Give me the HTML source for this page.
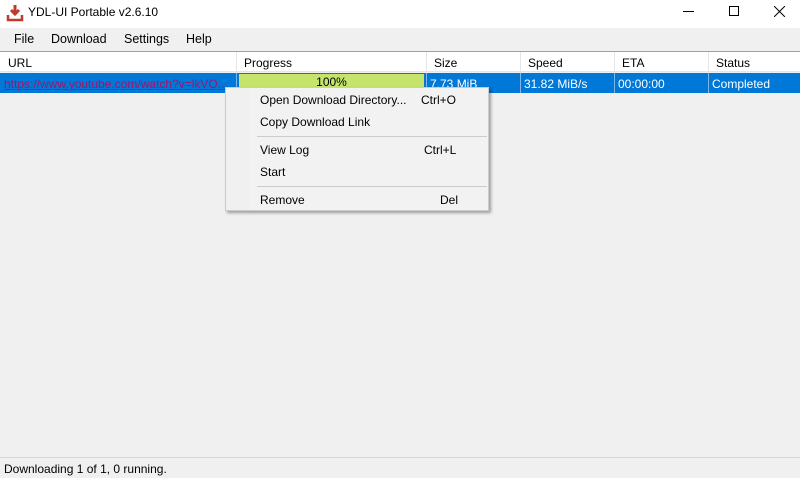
<!DOCTYPE html>
<html><head><meta charset="utf-8"><style>
*{margin:0;padding:0;box-sizing:border-box}
body{width:800px;height:478px;background:#f0f0f0;font-family:"Liberation Sans",sans-serif;font-size:12px;color:#000;position:relative;overflow:hidden}
.a{position:absolute;white-space:nowrap}
</style></head><body>
<div class="a" style="left:0;top:0;width:800px;height:28px;background:#fff"></div>
<svg class="a" style="left:6px;top:4px" width="18" height="18" viewBox="0 0 18 18"><path d="M9 1v9M5 6l4 4 4-4" stroke="#c0392b" stroke-width="3" fill="none"/><path d="M2 11v5h14v-5" stroke="#c0392b" stroke-width="2.5" fill="none"/></svg>
<div class="a" style="left:28px;top:5px;font-size:12px">YDL-UI Portable v2.6.10</div>
<div class="a" style="left:683px;top:11px;width:11px;height:1px;background:#000"></div>
<div class="a" style="left:729px;top:6px;width:10px;height:10px;border:1px solid #000"></div>
<svg class="a" style="left:774px;top:6px" width="11" height="11"><path d="M0 0L11 11M11 0L0 11" stroke="#000" stroke-width="1"/></svg>
<div class="a" style="left:0;top:28px;width:800px;height:23px;background:#f0f0f0"></div>
<div class="a" style="left:14px;top:32px;font-size:12.5px">File</div>
<div class="a" style="left:51px;top:32px;font-size:12.5px">Download</div>
<div class="a" style="left:124px;top:32px;font-size:12.5px">Settings</div>
<div class="a" style="left:186px;top:32px;font-size:12.5px">Help</div>
<div class="a" style="left:0;top:51px;width:800px;height:1px;background:#a0a0a0"></div>
<div class="a" style="left:0;top:52px;width:800px;height:20px;background:#fff;border-bottom:1px solid #e5e5e5"></div>
<div class="a" style="left:236px;top:52px;width:1px;height:41px;background:#e5e5e5"></div>
<div class="a" style="left:426px;top:52px;width:1px;height:41px;background:#e5e5e5"></div>
<div class="a" style="left:520px;top:52px;width:1px;height:41px;background:#e5e5e5"></div>
<div class="a" style="left:614px;top:52px;width:1px;height:41px;background:#e5e5e5"></div>
<div class="a" style="left:708px;top:52px;width:1px;height:41px;background:#e5e5e5"></div>
<div class="a" style="left:8px;top:56px">URL</div>
<div class="a" style="left:244px;top:56px">Progress</div>
<div class="a" style="left:434px;top:56px">Size</div>
<div class="a" style="left:528px;top:56px">Speed</div>
<div class="a" style="left:622px;top:56px">ETA</div>
<div class="a" style="left:716px;top:56px">Status</div>
<div class="a" style="left:0;top:73px;width:800px;height:20px;background:#0078d7"></div>
<div class="a" style="left:236px;top:73px;width:1px;height:20px;background:#7fb6e8"></div>
<div class="a" style="left:426px;top:73px;width:1px;height:20px;background:#7fb6e8"></div>
<div class="a" style="left:520px;top:73px;width:1px;height:20px;background:#7fb6e8"></div>
<div class="a" style="left:614px;top:73px;width:1px;height:20px;background:#7fb6e8"></div>
<div class="a" style="left:708px;top:73px;width:1px;height:20px;background:#7fb6e8"></div>
<div class="a" style="left:4px;top:77px;color:#a0146e;text-decoration:underline">https://www.youtube.com/watch?v=lkVO...</div>
<div class="a" style="left:239px;top:74px;width:185px;height:18px;background:#c5e46b;text-align:center;line-height:17px">100%</div>
<div class="a" style="left:430px;top:77px;color:#fff">7.73 MiB</div>
<div class="a" style="left:524px;top:77px;color:#fff">31.82 MiB/s</div>
<div class="a" style="left:618px;top:77px;color:#fff">00:00:00</div>
<div class="a" style="left:712px;top:77px;color:#fff">Completed</div>
<div class="a" style="left:225px;top:87px;width:264px;height:124px;background:#f2f2f2;border:1px solid #ccc;box-shadow:2px 2px 3px rgba(0,0,0,0.35)"></div>
<div class="a" style="left:226px;top:88px;width:24px;height:122px;background:#f0f0f0"></div>
<div class="a" style="left:260px;top:93px">Open Download Directory...</div>
<div class="a" style="left:421px;top:93px">Ctrl+O</div>
<div class="a" style="left:260px;top:115px">Copy Download Link</div>
<div class="a" style="left:257px;top:136px;width:230px;height:1px;background:#ccc"></div>
<div class="a" style="left:260px;top:143px">View Log</div>
<div class="a" style="left:424px;top:143px">Ctrl+L</div>
<div class="a" style="left:260px;top:165px">Start</div>
<div class="a" style="left:257px;top:186px;width:230px;height:1px;background:#ccc"></div>
<div class="a" style="left:260px;top:193px">Remove</div>
<div class="a" style="left:440px;top:193px">Del</div>
<div class="a" style="left:0;top:457px;width:800px;height:1px;background:#d7d7d7"></div>
<div class="a" style="left:4px;top:462px">Downloading 1 of 1, 0 running.</div>
</body></html>
